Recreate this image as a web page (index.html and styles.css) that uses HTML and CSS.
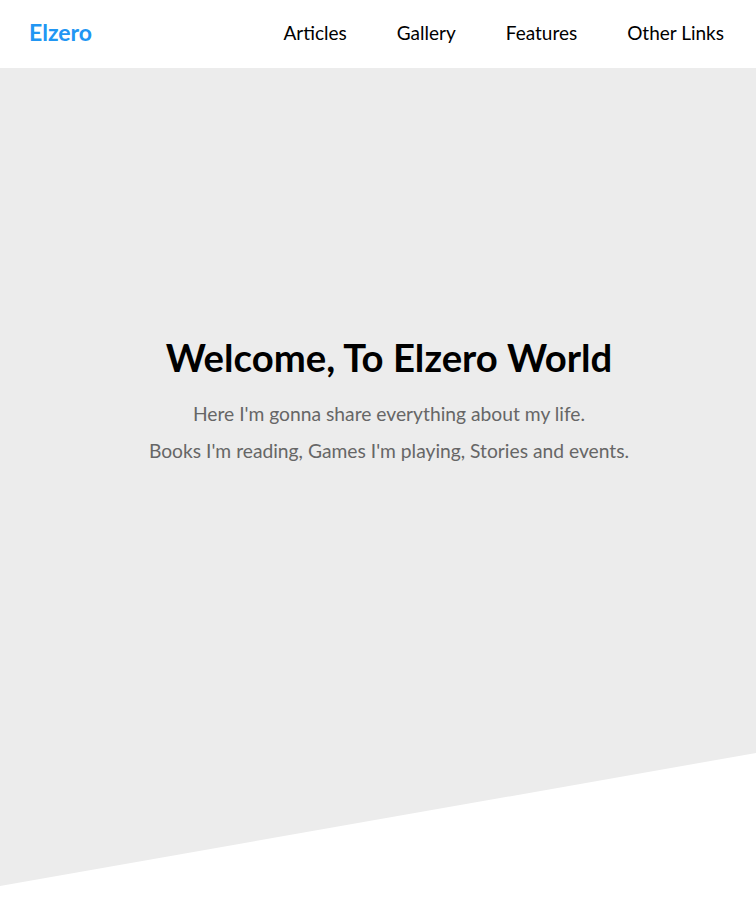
FILE: index.html
```html
<!DOCTYPE html>
<html lang="en">
<head>
<meta charset="utf-8">
<title>Elzero</title>
<link rel="stylesheet" href="styles.css">
</head>
<body>
<header class="header">
  <a class="logo" href="#">Elzero</a>
  <nav class="nav">
    <a href="#">Articles</a>
    <a href="#">Gallery</a>
    <a href="#">Features</a>
    <a href="#">Other Links</a>
  </nav>
</header>
<section class="landing">
  <div class="intro">
    <h1>Welcome, To Elzero World</h1>
    <p>Here I'm gonna share everything about my life.</p>
    <p>Books I'm reading, Games I'm playing, Stories and events.</p>
  </div>
</section>
</body>
</html>
```

FILE: styles.css
```css
* { box-sizing: border-box; }
html, body { margin: 0; padding: 0; background: #fff; }
body { font-family: Lato, "Noto Sans", sans-serif; }
a { text-decoration: none; }
.header {
  height: 68px;
  display: flex;
  align-items: center;
  justify-content: space-between;
  padding: 0 32px 4px 29px;
}
.logo {
  color: #2196f3;
  font-weight: 700;
  font-size: 23px;
}
.nav { display: flex; gap: 50px; }
.nav a { color: #000; font-size: 19px; }
.landing {
  height: 818px;
  background: #ececec;
  clip-path: polygon(0 0, 100% 0, 100% calc(100% - 133px), 0 100%);
  display: flex;
  justify-content: center;
  padding-left: 22px;
}
.intro { text-align: center; padding-top: 265px; }
.intro h1 {
  margin: 0 0 14px;
  font-size: 38.3px;
  line-height: 48px;
  font-weight: 700;
  color: #000;
}
.intro p {
  margin: 0;
  font-size: 19.25px;
  line-height: 37px;
  color: #666;
}
```
